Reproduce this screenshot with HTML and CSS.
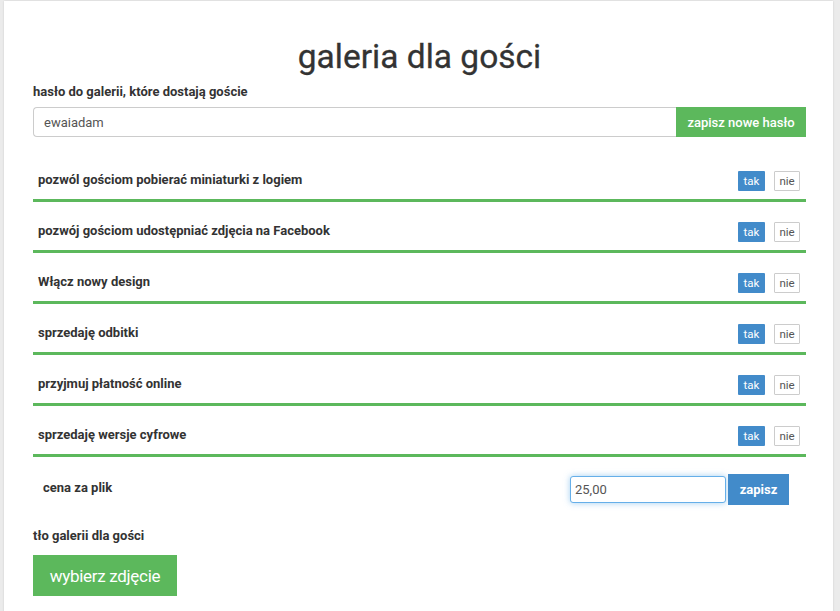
FILE: index.html
```html
<!DOCTYPE html>
<html lang="pl">
<head>
    <meta charset="UTF-8">
    <meta name="viewport" content="width=device-width, initial-scale=1.0">
    <title>Galeria dla gości</title>
    <link rel="stylesheet" href="styles.css">
</head>
<body>
    <div class="panel">
        <h1>galeria dla gości</h1>

        <label class="field-label" for="password">hasło do galerii, które dostają goście</label>
        <div class="input-group">
            <input type="text" id="password" value="ewaiadam">
            <button class="btn btn-green">zapisz nowe hasło</button>
        </div>

        <div class="options">
            <div class="option">
                <span class="option-label">pozwól gościom pobierać miniaturki z logiem</span>
                <div class="switch"><button class="btn-yes">tak</button><button class="btn-no">nie</button></div>
            </div>
            <div class="option">
                <span class="option-label">pozwój gościom udostępniać zdjęcia na Facebook</span>
                <div class="switch"><button class="btn-yes">tak</button><button class="btn-no">nie</button></div>
            </div>
            <div class="option">
                <span class="option-label">Włącz nowy design</span>
                <div class="switch"><button class="btn-yes">tak</button><button class="btn-no">nie</button></div>
            </div>
            <div class="option">
                <span class="option-label">sprzedaję odbitki</span>
                <div class="switch"><button class="btn-yes">tak</button><button class="btn-no">nie</button></div>
            </div>
            <div class="option">
                <span class="option-label">przyjmuj płatność online</span>
                <div class="switch"><button class="btn-yes">tak</button><button class="btn-no">nie</button></div>
            </div>
            <div class="option">
                <span class="option-label">sprzedaję wersje cyfrowe</span>
                <div class="switch"><button class="btn-yes">tak</button><button class="btn-no">nie</button></div>
            </div>
        </div>

        <div class="price-row">
            <label class="price-label" for="price">cena za plik</label>
            <div class="price-controls">
                <input type="text" id="price" class="price-input" value="25,00">
                <button class="btn btn-blue">zapisz</button>
            </div>
        </div>

        <div class="field-label bg-label">tło galerii dla gości</div>
        <button class="btn btn-green btn-large">wybierz zdjęcie</button>
    </div>
</body>
</html>
```

FILE: styles.css
```css
body {
    font-family: Roboto, "Liberation Sans", Arial, sans-serif;
    margin: 0;
    padding: 0;
    background-color: #ebebeb;
    color: #333;
}

.panel {
    margin: 1px 7px 0 4px;
    padding: 38px 27px 20px 29px;
    min-height: 560px;
    background-color: #fff;
    box-shadow: 0 0 2px rgba(0, 0, 0, 0.12);
}

h1 {
    margin: 0 0 9px;
    font-size: 33.5px;
    font-weight: 400;
    line-height: 36px;
    text-align: center;
    -webkit-text-stroke: 0.3px #333;
}

.field-label {
    display: block;
    font-size: 13px;
    font-weight: 700;
    line-height: 16px;
    margin-bottom: 7px;
}

button {
    font-family: inherit;
    cursor: pointer;
}

.btn {
    border: none;
    color: #fff;
    font-size: 13px;
    font-weight: 500;
}

.btn-green {
    background-color: #5cb85c;
}

.btn-blue {
    background-color: #428bca;
    font-weight: 700;
}

.input-group {
    display: flex;
    height: 30px;
}

.input-group input {
    flex: 1;
    box-sizing: border-box;
    height: 30px;
    padding: 0 10px;
    border: 1px solid #ccc;
    border-right: none;
    border-radius: 4px 0 0 4px;
    font-family: inherit;
    font-size: 13px;
    color: #555;
}

.input-group .btn {
    width: 130px;
    height: 30px;
}

.options {
    margin-top: 14px;
}

.option {
    display: flex;
    justify-content: space-between;
    align-items: center;
    height: 48px;
    padding: 0 6px 0 5px;
    border-bottom: 3px solid #5cb85c;
}

.option-label {
    font-size: 13px;
    font-weight: 700;
    margin-top: 9px;
}

.switch {
    display: flex;
    gap: 9px;
    margin-top: 12px;
}

.btn-yes,
.btn-no {
    box-sizing: border-box;
    height: 20px;
    padding: 0;
    font-size: 11.5px;
    border-radius: 1px;
}

.btn-yes {
    width: 27px;
    border: none;
    background-color: #428bca;
    color: #fff;
}

.btn-no {
    width: 26px;
    border: 1px solid #ccc;
    background-color: #fff;
    color: #555;
}

.price-row {
    display: flex;
    justify-content: space-between;
    align-items: center;
    margin-top: 17px;
    padding: 0 17px 0 10px;
}

.price-label {
    font-size: 13px;
    font-weight: 700;
    margin-top: -4px;
}

.price-controls {
    display: flex;
    align-items: center;
    gap: 2px;
}

.price-input {
    box-sizing: border-box;
    width: 156px;
    height: 27px;
    padding: 0 4px;
    border: 1px solid #66afe9;
    border-radius: 3px;
    box-shadow: 0 0 6px rgba(102, 175, 233, 0.6);
    font-family: inherit;
    font-size: 13px;
    color: #555;
    outline: none;
}

.btn-blue {
    width: 61px;
    height: 31px;
}

.bg-label {
    margin-top: 23px;
    margin-bottom: 11px;
}

.btn-large {
    width: 144px;
    height: 41px;
    font-size: 17px;
    font-weight: 400;
    letter-spacing: -0.3px;
}
```
